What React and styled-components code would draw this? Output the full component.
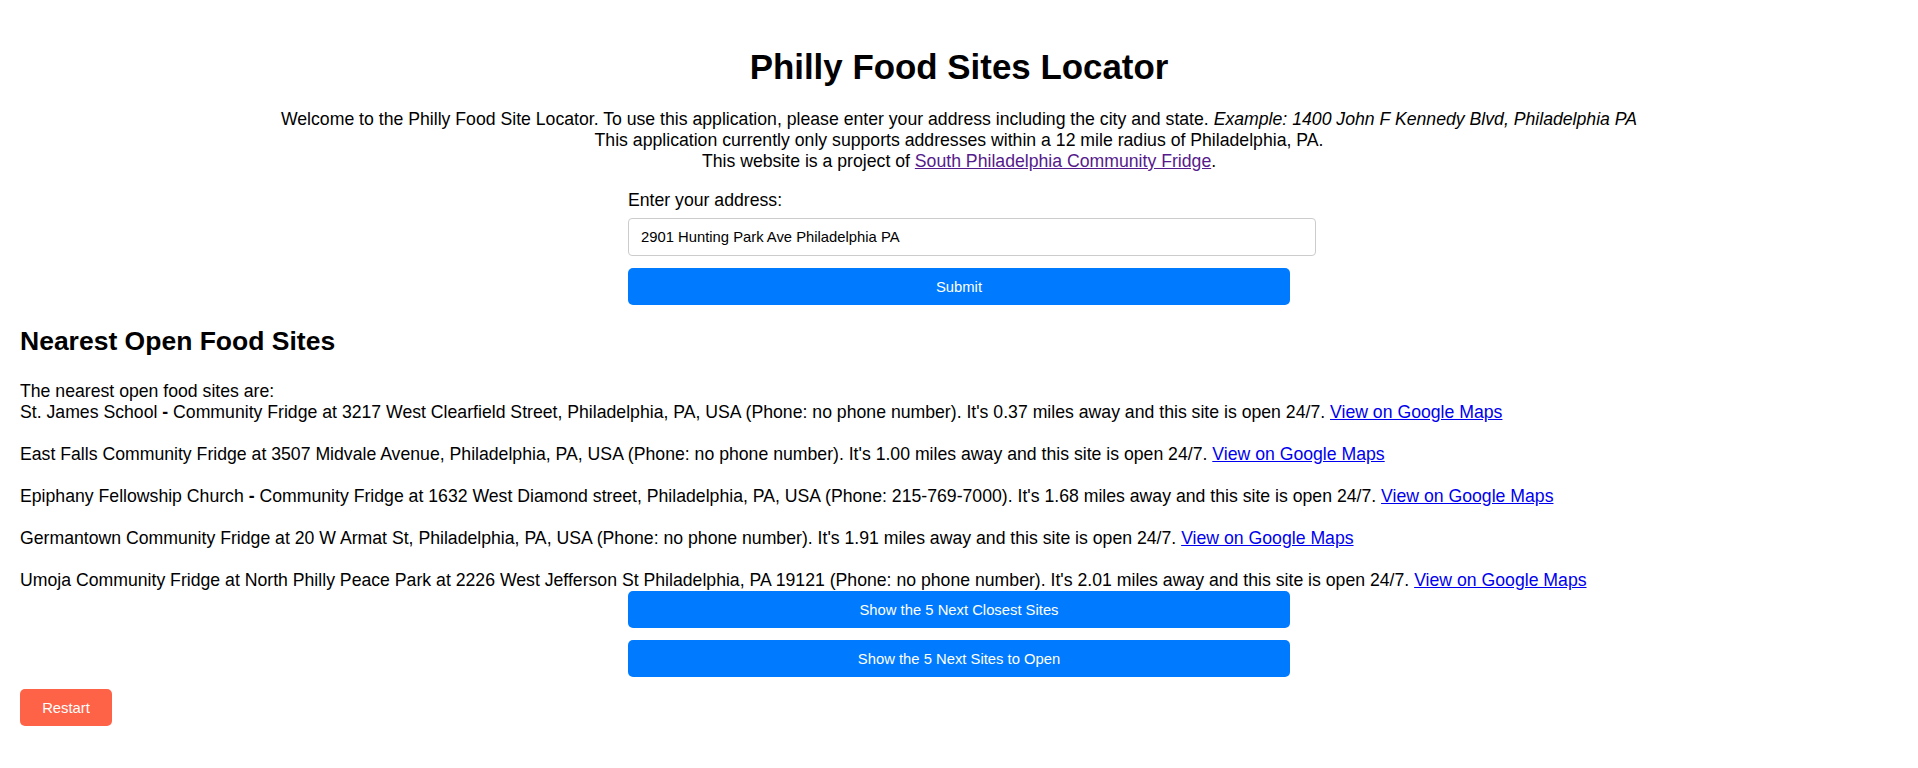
import React from "react";
import styled, { createGlobalStyle } from "styled-components";

const GlobalStyle = createGlobalStyle`
  html, body {
    margin: 0;
    padding: 0;
    background: #ffffff;
  }
  body {
    font-family: "Liberation Sans", Arial, sans-serif;
    font-size: 17.66px;
    line-height: 21px;
    color: #000000;
  }
`;

const Page = styled.div`
  padding: 20px;
`;

const Header = styled.header`
  text-align: center;
`;

const Title = styled.h1`
  font-size: 34.9px;
  line-height: 41px;
  font-weight: bold;
  margin: 26px 0 22px;
`;

const Intro = styled.p`
  margin: 0 0 18px;
`;

const Link = styled.a`
  color: ${(p) => (p.$visited ? "#551A8B" : "#0000EE")};
  text-decoration: underline;
  cursor: pointer;
`;

const Form = styled.form`
  width: 662px;
  margin: 0 auto;
  text-align: left;
`;

const Label = styled.label`
  display: block;
  margin-bottom: 7px;
`;

const AddressInput = styled.input`
  display: block;
  width: 100%;
  box-sizing: content-box;
  padding: 10px 12px;
  font-family: "Liberation Sans", Arial, sans-serif;
  font-size: 14.8px;
  line-height: 16px;
  color: #000;
  border: 1px solid #cccccc;
  border-radius: 4px;
  margin: 0 0 12px;
  outline: none;
`;

const Button = styled.button`
  display: block;
  width: ${(p) => p.$width || "100%"};
  height: 37px;
  padding: 0 10px;
  font-family: "Liberation Sans", Arial, sans-serif;
  font-size: 14.8px;
  color: #ffffff;
  background: ${(p) => p.$color || "#007BFF"};
  border: none;
  border-radius: 5px;
  cursor: pointer;
`;

const Results = styled.section``;

const SectionTitle = styled.h2`
  font-size: 26.5px;
  line-height: 31px;
  font-weight: bold;
  margin: 21px 0 24px;
`;

const SiteList = styled.div``;

const Dash = styled.b``;

const ButtonStack = styled.div`
  width: 662px;
  margin: 0 auto;
  display: flex;
  flex-direction: column;
  gap: 12px;
`;

const Footer = styled.div`
  margin-top: 12px;
`;

const sites = [
  {
    name: (
      <>
        St. James School <Dash>-</Dash> Community Fridge
      </>
    ),
    address: "3217 West Clearfield Street, Philadelphia, PA, USA",
    phone: "no phone number",
    miles: "0.37",
  },
  {
    name: "East Falls Community Fridge",
    address: "3507 Midvale Avenue, Philadelphia, PA, USA",
    phone: "no phone number",
    miles: "1.00",
  },
  {
    name: (
      <>
        Epiphany Fellowship Church <Dash>-</Dash> Community Fridge
      </>
    ),
    address: "1632 West Diamond street, Philadelphia, PA, USA",
    phone: "215-769-7000",
    miles: "1.68",
  },
  {
    name: "Germantown Community Fridge",
    address: "20 W Armat St, Philadelphia, PA, USA",
    phone: "no phone number",
    miles: "1.91",
  },
  {
    name: "Umoja Community Fridge at North Philly Peace Park",
    address: "2226 West Jefferson St Philadelphia, PA 19121",
    phone: "no phone number",
    miles: "2.01",
  },
];

export default function App() {
  return (
    <>
      <GlobalStyle />
      <Page>
        <Header>
          <Title>Philly Food Sites Locator</Title>
          <Intro>
            Welcome to the Philly Food Site Locator. To use this application, please enter your
            address including the city and state.{" "}
            <i>Example: 1400 John F Kennedy Blvd, Philadelphia PA</i>
            <br />
            This application currently only supports addresses within a 12 mile radius of
            Philadelphia, PA.
            <br />
            This website is a project of{" "}
            <Link $visited href="#">
              South Philadelphia Community Fridge
            </Link>
            .
          </Intro>
          <Form onSubmit={(e) => e.preventDefault()}>
            <Label htmlFor="address">Enter your address:</Label>
            <AddressInput
              id="address"
              type="text"
              defaultValue="2901 Hunting Park Ave Philadelphia PA"
            />
            <Button type="submit">Submit</Button>
          </Form>
        </Header>
        <Results>
          <SectionTitle>Nearest Open Food Sites</SectionTitle>
          <SiteList>
            The nearest open food sites are:
            <br />
            {sites.map((s, i) => (
              <React.Fragment key={i}>
                {i > 0 && (
                  <>
                    <br />
                    <br />
                  </>
                )}
                {s.name} at {s.address} (Phone: {s.phone}). It's {s.miles} miles away and this
                site is open 24/7. <Link href="#">View on Google Maps</Link>
              </React.Fragment>
            ))}
          </SiteList>
          <ButtonStack>
            <Button type="button">Show the 5 Next Closest Sites</Button>
            <Button type="button">Show the 5 Next Sites to Open</Button>
          </ButtonStack>
          <Footer>
            <Button type="button" $width="92px" $color="#FF6347">
              Restart
            </Button>
          </Footer>
        </Results>
      </Page>
    </>
  );
}
